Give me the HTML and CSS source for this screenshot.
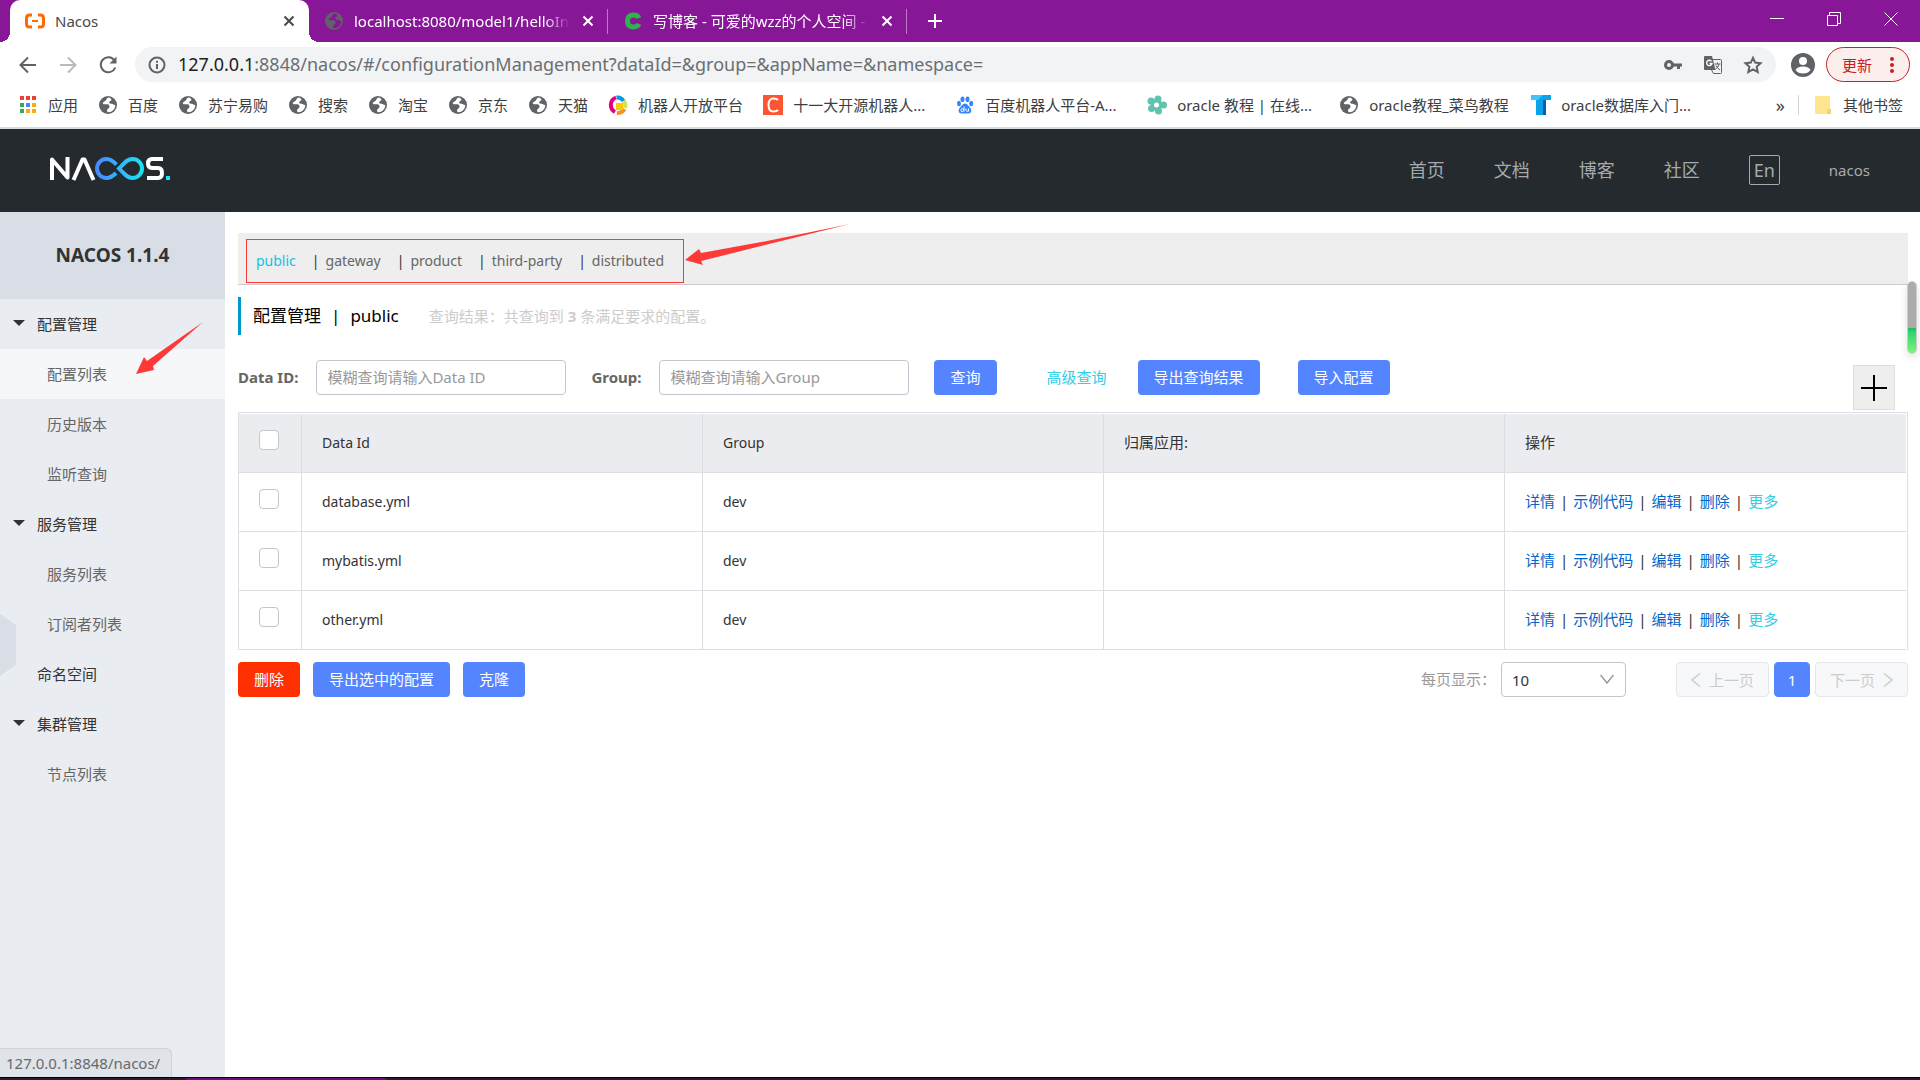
FILE: index.html
```html
<!DOCTYPE html>
<html lang="zh-CN">
<head>
<meta charset="utf-8">
<title>Nacos</title>
<link rel="stylesheet" href="styles.css">
</head>
<body>
<svg class="defs" aria-hidden="true">
  <defs>
    <symbol id="globe" viewBox="0 0 20 20"><circle cx="10" cy="10" r="9" fill="currentColor"/><path d="M10.500 2.600C8.500 3.200 9 4.600 7.800 5.400 6.200 6.400 4.600 7 4.800 8.600 5.200 9.800 7.600 9 9.200 9.300 11 9.600 11.800 10.600 11.400 12.200 11 13.600 9.200 13.600 9 15.200 8.900 16.200 9.400 17 10.200 17.300 14.400 17.200 17.300 14 17.300 10 15.600 10.400 15.400 9 13.800 8.800 12.400 8.700 11.200 8.400 11.200 7.200 11.200 6 13 6 13.400 4.900 13.600 4 12.200 2.800 10.500 2.600Z" fill="var(--land)"/></symbol>
    <symbol id="close" viewBox="0 0 16 16"><path d="M3.500 3.500 12.500 12.500M12.500 3.500 3.500 12.500" stroke="currentColor" stroke-width="2" fill="none"/></symbol>
  </defs>
</svg>

<div class="browser">
  <div class="tabstrip">
    <div class="tab tab-active">
      <svg class="icon" viewBox="0 0 20 20"><path d="M7 4H4.500Q1.500 4 1.500 7V13Q1.500 16 4.500 16H7M13 4H15.500Q18.500 4 18.500 7V13Q18.500 16 15.500 16H13" fill="none" stroke="#ff6a00" stroke-width="3"/><path d="M7 10H13" stroke="#ff6a00" stroke-width="2"/></svg>
      <span class="tab-title">Nacos</span>
      <button class="tab-close" aria-label="关闭"><svg viewBox="0 0 16 16"><use href="#close"/></svg></button>
    </div>
    <div class="tab">
      <svg class="icon icon-dim" viewBox="0 0 20 20"><use href="#globe"/></svg>
      <span class="tab-title fade">localhost:8080/model1/helloIn</span>
      <button class="tab-close" aria-label="关闭"><svg viewBox="0 0 16 16"><use href="#close"/></svg></button>
    </div>
    <div class="tab">
      <svg class="icon" viewBox="0 0 20 20"><path d="M16 7Q14.500 4 10.500 4 4.500 4 4.500 10 4.500 16 10.500 16 14.500 16 16 13" fill="none" stroke="#2fb24c" stroke-width="5"/></svg>
      <span class="tab-title fade">写博客 - 可爱的wzz的个人空间 -</span>
      <button class="tab-close" aria-label="关闭"><svg viewBox="0 0 16 16"><use href="#close"/></svg></button>
    </div>
    <button class="new-tab" aria-label="新标签页"><svg viewBox="0 0 16 16"><path d="M8 1V15M1 8H15" stroke="currentColor" stroke-width="2"/></svg></button>
    <div class="window-controls">
      <button aria-label="最小化"><svg viewBox="0 0 14 14"><path d="M0 6.500H14" stroke="currentColor"/></svg></button>
      <button aria-label="还原"><svg viewBox="0 0 14 14"><path d="M.5 3.500H10.500V13.500H.5ZM2.500 3.500V.5H13.500V11.500H10.500" fill="none" stroke="currentColor"/></svg></button>
      <button aria-label="关闭窗口"><svg viewBox="0 0 14 14"><path d="M.5 .5 13.500 13.500M13.500 .5 .5 13.500" stroke="currentColor"/></svg></button>
    </div>
  </div>

  <div class="toolbar">
    <button class="nav-btn" aria-label="后退"><svg viewBox="0 0 20 20"><path d="M18 10H3M10 2.500 2.500 10 10 17.500" fill="none" stroke="currentColor" stroke-width="2"/></svg></button>
    <button class="nav-btn nav-off" aria-label="前进"><svg viewBox="0 0 20 20"><path d="M2 10H17M10 2.500 17.500 10 10 17.500" fill="none" stroke="currentColor" stroke-width="2"/></svg></button>
    <button class="nav-btn" aria-label="重新加载"><svg viewBox="0 0 20 20"><path d="M16.500 5.500A7.500 7.500 0 1 0 17.300 12.500" fill="none" stroke="currentColor" stroke-width="2"/><path d="M18.500 1.500V8.500H11.500Z" fill="currentColor"/></svg></button>
    <div class="omnibox">
      <svg class="info" viewBox="0 0 18 18"><circle cx="9" cy="9" r="7.500" fill="none" stroke="currentColor" stroke-width="2"/><path d="M9 8V13M9 4.800V6.800" stroke="currentColor" stroke-width="2"/></svg>
      <div class="url" role="textbox" aria-label="地址"><span class="host">127.0.0.1</span>:8848/nacos/#/configurationManagement?dataId=&amp;group=&amp;appName=&amp;namespace=</div>
      <svg class="icon" viewBox="0 0 20 20"><circle cx="6" cy="10" r="3.500" fill="none" stroke="currentColor" stroke-width="3"/><path d="M10 10H19M15.500 10V14" stroke="currentColor" stroke-width="3"/></svg>
      <svg class="icon" viewBox="0 0 20 20"><path d="M8 4.500H17.500Q18.500 4.500 18.500 5.500V17.500Q18.500 18.500 17.500 18.500H10.500L8 14" fill="none" stroke="currentColor"/><path d="M2 1H9L12.500 15H2Q1 15 1 14V2Q1 1 2 1Z" fill="currentColor"/><path d="M8.500 6.300A2.700 2.700 0 1 0 9 8.500H6.500" fill="none" stroke="#fff" stroke-width="1.300"/><path d="M11.500 9H17.500M14.500 7.500V9M16 9Q15.500 12.500 12.500 14M13 10.500Q14.500 13.500 17 15" fill="none" stroke="currentColor"/></svg>
      <svg class="icon" viewBox="0 0 20 20"><path d="M10 2.800 12.200 7.600 17.500 8.200 13.600 11.800 14.700 17 10 14.300 5.300 17 6.400 11.800 2.500 8.200 7.800 7.600Z" fill="none" stroke="currentColor" stroke-width="2"/></svg>
    </div>
    <svg class="avatar" viewBox="0 0 24 24"><circle cx="12" cy="12" r="12" fill="currentColor"/><circle cx="12" cy="8" r="4" fill="#fff"/><path d="M4.500 17Q6 13.500 12 13.500T19.500 17Q17 20.500 12 20.500T4.500 17Z" fill="#fff"/></svg>
    <button class="update">更新<svg viewBox="0 0 4 18"><circle cx="2" cy="3" r="2"/><circle cx="2" cy="9" r="2"/><circle cx="2" cy="15" r="2"/></svg></button>
  </div>

  <nav class="bookmarks" aria-label="书签">
    <a href="#"><svg class="icon" viewBox="0 0 20 20"><path d="M2 1H6V5H2ZM8 1H12V5H8ZM14 1H18V5H14Z" fill="#ea4335"/><path d="M2 8H6V12H2ZM2 14H6V18H2Z" fill="#34a853"/><path d="M8 8H12V12H8Z" fill="#4285f4"/><path d="M14 8H18V12H14ZM8 14H12V18H8ZM14 14H18V18H14Z" fill="#fbab05"/></svg>应用</a>
    <a href="#"><svg class="icon" viewBox="0 0 20 20"><use href="#globe"/></svg>百度</a>
    <a href="#"><svg class="icon" viewBox="0 0 20 20"><use href="#globe"/></svg>苏宁易购</a>
    <a href="#"><svg class="icon" viewBox="0 0 20 20"><use href="#globe"/></svg>搜索</a>
    <a href="#"><svg class="icon" viewBox="0 0 20 20"><use href="#globe"/></svg>淘宝</a>
    <a href="#"><svg class="icon" viewBox="0 0 20 20"><use href="#globe"/></svg>京东</a>
    <a href="#"><svg class="icon" viewBox="0 0 20 20"><use href="#globe"/></svg>天猫</a>
    <a href="#"><svg class="icon" viewBox="0 0 20 20"><g fill="none" stroke-width="4"><path d="M8 2.500A8 8 0 0 0 7 17" stroke="#e6007e"/><path d="M8.500 2.500A7 7 0 0 1 15.500 6" stroke="#1296db"/><path d="M16 6A9 9 0 0 1 17 13" stroke="#d4e34a"/><path d="M16.500 14A8 8 0 0 1 9 18" stroke="#f7931e"/></g><path d="M8 8H15V15H8Z" fill="#fcc800"/></svg>机器人开放平台</a>
    <a href="#" class="long"><svg class="icon" viewBox="0 0 20 20"><path d="M0 0H20V20H0Z" fill="#fc5531"/><path d="M15 5Q13.500 3.500 10.500 3.500 5.500 3.500 5.500 10T10.500 16.500Q13.500 16.500 15 15" fill="none" stroke="#fff" stroke-width="2"/></svg>十一大开源机器人...</a>
    <a href="#" class="long"><svg class="icon" viewBox="0 0 20 20"><g fill="#3385ff"><ellipse cx="4" cy="8.500" rx="2" ry="2.700"/><ellipse cx="7.500" cy="4.300" rx="2" ry="2.800"/><ellipse cx="12.500" cy="4.300" rx="2" ry="2.800"/><ellipse cx="16.200" cy="8.500" rx="2" ry="2.700"/><path d="M10 8.500C12.500 8.500 13.500 11 15 12.500 17 14.500 17 18.500 13.500 18.500H6.500C3 18.500 3 14.500 5 12.500 6.500 11 7.500 8.500 10 8.500Z"/></g><path d="M9 11.500V16.500M9 14.500Q6 12.500 6 15.200T9 15.500M11 13.500V15.500Q11 16.500 13.500 16.200V13.500" fill="none" stroke="#fff"/></svg>百度机器人平台-A...</a>
    <a href="#" class="long"><svg class="icon" viewBox="0 0 20 20"><g fill="#5fc3b0"><circle cx="11" cy="4" r="3.500"/><circle cx="4" cy="6" r="3.500"/><circle cx="4.500" cy="13.500" r="3.500"/><circle cx="11.500" cy="16" r="3.500"/><circle cx="16.500" cy="10" r="3.500"/><circle cx="9.500" cy="10" r="6"/></g><circle cx="9.500" cy="10" r="2.500" fill="#fff"/></svg>oracle 教程 | 在线...</a>
    <a href="#" class="long"><svg class="icon" viewBox="0 0 20 20"><use href="#globe"/></svg>oracle教程_菜鸟教程</a>
    <a href="#" class="long"><svg class="icon" viewBox="0 0 20 20"><path d="M0 0H20V5H15V20H5V5H0Z" fill="#0aa2e8"/><path d="M0 0H12L7 5H0Z" fill="#41c4fb"/><path d="M12 5H15V20H12Z" fill="#0a5bb5"/></svg>oracle数据库入门...</a>
    <button class="more" aria-label="更多书签">»</button>
    <a href="#" class="other"><svg class="icon" viewBox="0 0 20 20"><path d="M3 1H16Q17 1 17 2V19H3Q2 19 2 18V2Q2 1 3 1Z" fill="#ffe58e"/><path d="M14 14H18V18Q18 19 17 19H14Z" fill="#fbd456"/></svg>其他书签</a>
  </nav>
</div>

<header class="site-header">
  <a href="#" class="logo" aria-label="NACOS">
    <svg viewBox="0 0 122 24">
      <defs><linearGradient id="inf" gradientUnits="userSpaceOnUse" x1="46" x2="95" y1="0" y2="0"><stop offset="0" stop-color="#4a86ff"/><stop offset="1" stop-color="#17e6f5"/></linearGradient></defs>
      <g fill="none" stroke="#fff" stroke-width="4" stroke-linejoin="round"><path d="M3 23V2.500L18.500 20.500V0"/><path d="M24.500 23 33.500 2.500H35.500L44.500 23"/><path d="M114 2H103Q99 2 99 6.500T103 11H109Q113 11 113 16T109 21H98"/></g>
      <g fill="none" stroke="url(#inf)" stroke-width="4"><path d="M67.500 7.500C64 4 61 2 57.500 2 52 2 48 6.500 48 11.500S52 21 57.500 21C61 21 64 19 67 16"/><path d="M70 11.500C75 6.500 78 2 83.500 2 89 2 93 6.500 93 11.500S89 21 83.500 21C78 21 75 16.500 70 11.500Z"/></g>
      <path d="M117 19H121V23H117Z" fill="#17e6f5"/>
    </svg>
  </a>
  <nav class="site-nav" aria-label="站点">
    <a href="#">首页</a><a href="#">文档</a><a href="#">博客</a><a href="#">社区</a>
    <button class="lang">En</button>
    <a href="#" class="user">nacos</a>
  </nav>
</header>

<div class="layout">
  <aside class="sidebar">
    <h1>NACOS 1.1.4</h1>
    <ul class="menu">
      <li class="group"><a href="#">配置管理</a></li>
      <li class="leaf current"><a href="#">配置列表</a></li>
      <li class="leaf"><a href="#">历史版本</a></li>
      <li class="leaf"><a href="#">监听查询</a></li>
      <li class="group"><a href="#">服务管理</a></li>
      <li class="leaf"><a href="#">服务列表</a></li>
      <li class="leaf"><a href="#">订阅者列表</a></li>
      <li class="plain"><a href="#">命名空间</a></li>
      <li class="group"><a href="#">集群管理</a></li>
      <li class="leaf"><a href="#">节点列表</a></li>
    </ul>
    <button class="collapse" aria-label="收起菜单"></button>
    <svg class="arrow-menu" viewBox="0 0 67 53" aria-hidden="true"><path d="M67 0 17 44 18 48 0 52 8 35 11 39Z" fill="#fe3a39"/></svg>
    <div class="status">127.0.0.1:8848/nacos/</div>
  </aside>

  <main class="content">
    <nav class="namespaces" aria-label="命名空间">
      <a href="#" class="on">public</a><a href="#">gateway</a><a href="#">product</a><a href="#">third-party</a><a href="#">distributed</a>
      <span class="frame"></span>
      <svg class="arrow-ns" viewBox="0 0 165 42" aria-hidden="true"><path d="M165 0 16 37 18 41 0 36 14 25 16 29 82 17Z" fill="#fe3a39"/></svg>
    </nav>

    <div class="title">
      <h2>配置管理<span class="bar">|</span>public</h2>
      <p>查询结果：共查询到 <b>3</b> 条满足要求的配置。</p>
    </div>

    <form class="search">
      <label for="data-id">Data ID:</label>
      <input id="data-id" type="text" placeholder="模糊查询请输入Data ID">
      <label for="group">Group:</label>
      <input id="group" type="text" placeholder="模糊查询请输入Group">
      <button type="button" class="btn">查询</button>
      <a href="#" class="advanced">高级查询</a>
      <button type="button" class="btn export">导出查询结果</button>
      <button type="button" class="btn">导入配置</button>
      <button type="button" class="add" aria-label="新建配置"><svg viewBox="0 0 26 26"><path d="M13 0V26M0 13H26" stroke="#000" stroke-width="2"/></svg></button>
    </form>

    <div class="table-wrap">
      <table>
        <thead>
          <tr><th class="check"><input type="checkbox" aria-label="全选"></th><th>Data Id</th><th>Group</th><th>归属应用:</th><th>操作</th></tr>
        </thead>
        <tbody>
          <tr><td class="check"><input type="checkbox" aria-label="database.yml"></td><td>database.yml</td><td>dev</td><td></td><td class="ops"><a href="#">详情</a><i>|</i><a href="#">示例代码</a><i>|</i><a href="#">编辑</a><i>|</i><a href="#">删除</a><i>|</i><a href="#" class="cyan">更多</a></td></tr>
          <tr><td class="check"><input type="checkbox" aria-label="mybatis.yml"></td><td>mybatis.yml</td><td>dev</td><td></td><td class="ops"><a href="#">详情</a><i>|</i><a href="#">示例代码</a><i>|</i><a href="#">编辑</a><i>|</i><a href="#">删除</a><i>|</i><a href="#" class="cyan">更多</a></td></tr>
          <tr><td class="check"><input type="checkbox" aria-label="other.yml"></td><td>other.yml</td><td>dev</td><td></td><td class="ops"><a href="#">详情</a><i>|</i><a href="#">示例代码</a><i>|</i><a href="#">编辑</a><i>|</i><a href="#">删除</a><i>|</i><a href="#" class="cyan">更多</a></td></tr>
        </tbody>
      </table>
    </div>

    <div class="footer-row">
      <button class="btn danger">删除</button>
      <button class="btn">导出选中的配置</button>
      <button class="btn">克隆</button>
      <div class="pager">
        <label for="size">每页显示：</label>
        <span class="select"><select id="size"><option>10</option></select><svg viewBox="0 0 14 10"><path d="M.5 1 7 9 13.500 1" fill="none" stroke="currentColor" stroke-width="1.500"/></svg></span>
        <button class="page" disabled><svg viewBox="0 0 10 14"><path d="M9 .5 1 7 9 13.500" fill="none" stroke="currentColor" stroke-width="1.500"/></svg>上一页</button>
        <button class="page page-on">1</button>
        <button class="page" disabled>下一页<svg viewBox="0 0 10 14"><path d="M1 .5 9 7 1 13.500" fill="none" stroke="currentColor" stroke-width="1.500"/></svg></button>
      </div>
    </div>
    <span class="meter"></span>
  </main>
</div>
<div class="taskbar"><span></span></div>
</body>
</html>
```

FILE: styles.css
```css
* { box-sizing: border-box; }

body {
  margin: 0;
  min-height: 100vh;
  display: flex;
  flex-direction: column;
  font: 15px/20px "Noto Sans", "Noto Sans CJK SC", sans-serif;
  color: #333;
  background: #fff;
}

a { color: inherit; text-decoration: none; }
button { margin: 0; padding: 0; border: 0; background: none; font: inherit; color: inherit; }
svg { display: block; flex: none; }
h1, h2, p, ul { margin: 0; padding: 0; }
.defs { position: absolute; width: 0; height: 0; }
.icon { width: 20px; height: 20px; flex: none; }

/* browser chrome */
.browser { --land: #fff; border-bottom: 2px solid #d9dade; }

.tabstrip { display: flex; height: 42px; padding-left: 10px; background: #881798; color: #fff; }
.tab {
  flex: 0 1 299px;
  min-width: 0;
  display: flex;
  align-items: center;
  gap: 10px;
  padding: 0 12px 0 15px;
  position: relative;
}
.tab + .tab::after {
  content: "";
  position: absolute;
  right: 0;
  top: 9px;
  width: 1px;
  height: 25px;
  background: #bb7ac4;
}
.tab-active { background: #fff; color: #45494d; border-radius: 10px 10px 0 0; }
.tab-active::before, .tab-active::after {
  content: "";
  position: absolute;
  bottom: 0;
  width: 10px;
  height: 10px;
}
.tab-active::before { left: -10px; background: radial-gradient(circle at 0 0, transparent 10px, #fff 10px); }
.tab-active::after { right: -10px; background: radial-gradient(circle at 100% 0, transparent 10px, #fff 10px); }
.tab-title { flex: 1; min-width: 0; white-space: nowrap; }
.fade { -webkit-mask-image: linear-gradient(90deg, #000 88%, transparent); mask-image: linear-gradient(90deg, #000 88%, transparent); }
.tab-close svg { width: 16px; height: 16px; }
.icon-dim { --land: #881798; color: #5f6368; }
.new-tab { margin-left: 20px; }
.new-tab svg { width: 16px; height: 16px; }
.window-controls { display: flex; align-items: flex-start; gap: 43px; margin-left: auto; padding: 12px 22px 0 0; }
.window-controls svg { width: 14px; height: 14px; }

.toolbar { display: flex; align-items: center; height: 45px; padding: 0 10px 0 18px; gap: 20px; color: #5f6368; }
.nav-btn svg { width: 20px; height: 20px; }
.nav-off { color: #b8babd; }
.omnibox {
  flex: 1;
  display: flex;
  align-items: center;
  gap: 20px;
  height: 35px;
  margin-left: -3px;
  padding: 0 13px;
  border-radius: 18px;
  background: #f1f3f4;
}
.info { width: 18px; height: 18px; }
.url { flex: 1; margin-left: -8px; padding-bottom: 2px; font-size: 18px; line-height: 26px; color: #6b6f73; white-space: nowrap; }
.host { color: #202124; }
.avatar { width: 24px; height: 28px; margin: 0 -9px 0 -5px; }
.update {
  display: flex;
  align-items: center;
  gap: 18px;
  height: 35px;
  padding: 0 15px;
  border: 1px solid #c5221f;
  border-radius: 18px;
  background: #fceeed;
  color: #c5221f;
}
.update svg { width: 4px; height: 18px; fill: currentColor; }

.bookmarks { display: flex; align-items: center; gap: 20px; height: 40px; padding: 0 17px 4px 18px; color: #3c4043; white-space: nowrap; }
.bookmarks a { display: flex; align-items: center; gap: 10px; }
.bookmarks .icon { color: #5f6368; }
.bookmarks .long { flex: 0 0 172px; }
.more { margin-left: auto; font-size: 18px; }
.bookmarks .other { margin-left: -7px; padding-left: 14px; border-left: 1px solid #d0d2d5; }

/* site header */
.site-header { display: flex; align-items: center; justify-content: space-between; height: 83px; padding: 0 50px 2px 49px; background: #252a2f; }
.logo { padding-bottom: 2px; }
.logo svg { width: 122px; height: 24px; }
.site-nav { display: flex; align-items: center; gap: 49px; font-size: 18px; line-height: 26px; color: #a7aaac; }
.lang { height: 30px; padding: 0 4px; border: 1px solid #a7aaac; border-radius: 2px; line-height: 26px; }
.user { font-size: 15px; }

/* layout */
.layout { flex: 1; display: flex; }
.sidebar { position: relative; flex: 0 0 225px; background: #e9edf2; }
.sidebar h1 { height: 87px; background: #d9dde5; font-size: 19px; line-height: 87px; text-align: center; }
.menu { list-style: none; line-height: 50px; }
.menu a { display: block; padding-left: 37px; }
.menu .leaf a { padding-left: 47px; color: #666; }
.menu .current { background: #f5f7f9; }
.group { position: relative; }
.group::before {
  content: "";
  position: absolute;
  left: 13px;
  top: 21px;
  border: 6px solid transparent;
  border-top-color: #333;
  border-bottom: 0;
}
.collapse {
  position: absolute;
  left: 0;
  top: 402px;
  width: 16px;
  height: 62px;
  background: #d9dde5;
  clip-path: polygon(0 0, 100% 18%, 100% 82%, 0 100%);
}
.arrow-menu { position: absolute; left: 136px; top: 110px; width: 67px; height: 53px; }
.status {
  position: absolute;
  left: 0;
  bottom: 0;
  padding: 4px 11px 4px 6px;
  border: solid #cfd2d8;
  border-width: 1px 1px 0 0;
  border-radius: 0 6px 0 0;
  background: #e0e3e7;
  color: #666a6e;
}

.content { position: relative; flex: 1; min-width: 0; padding: 21px 12px 0 13px; }
.namespaces {
  position: relative;
  display: flex;
  height: 52px;
  padding: 0 18px;
  border-bottom: 1px solid #ccc;
  background: #eee;
  color: #666;
  font-size: 14px;
  line-height: 56px;
}
.namespaces a + a { margin-left: 16px; }
.namespaces a + a::before { content: "|"; margin-right: 6px; color: #333; }
.namespaces .on { color: #16c1e0; }
.frame { position: absolute; left: 8px; top: 6px; width: 438px; height: 44px; border: 1px solid #fe3a39; }
.arrow-ns { position: absolute; left: 447px; top: -9px; width: 165px; height: 42px; }

.title { display: flex; align-items: center; gap: 30px; height: 38px; margin-top: 12px; padding-left: 12px; border-left: 3px solid #0099cc; }
.title h2 { font-size: 17px; font-weight: 400; line-height: 24px; color: #000; }
.bar { margin: 0 10px; }
.title p { color: #ccc; }

.search { display: flex; align-items: center; height: 35px; margin-top: 25px; }
.search label { margin-right: 18px; padding-bottom: 2px; font-weight: 700; color: #666; }
.search input {
  flex: 0 0 250px;
  height: 35px;
  margin-right: 25px;
  padding: 0 10px 2px;
  border: 1px solid #c4c6cf;
  border-radius: 4px;
  font: inherit;
}
.search input::placeholder { color: #999; opacity: 1; }
.btn { height: 35px; padding: 0 16px 2px; border-radius: 4px; background: #5584ff; color: #fff; }
.danger { background: #ff3000; }
.advanced { margin: 0 31px 0 50px; padding-bottom: 2px; color: #33cde5; }
.export { margin-right: 38px; }
.add {
  align-self: flex-start;
  flex: none;
  display: grid;
  place-items: center;
  width: 42px;
  height: 45px;
  margin: 5px 13px 0 auto;
  border: 1px solid #ddd;
  background: #eee;
}
.add svg { width: 26px; height: 26px; }

.table-wrap { margin-top: 17px; padding: 1px 1px 0 0; border: solid #dcdee3; border-width: 1px 1px 0 1px; }
table { width: 100%; table-layout: fixed; border-collapse: separate; border-spacing: 0; }
th, td {
  height: 59px;
  padding: 0 20px;
  border: solid #dcdee3;
  border-width: 0 1px 1px 0;
  font-size: 14px;
  font-weight: 400;
  text-align: left;
}
th:nth-child(n+4), .ops { padding-bottom: 2px; font-size: 15px; }
th { background: #ebecf0; }
th:last-child, td:last-child { border-right: 0; }
.check { width: 63px; }
.check input {
  display: block;
  width: 20px;
  height: 20px;
  margin: 0 0 6px;
  border: 1px solid #c4c6cf;
  border-radius: 4px;
  background: #fff;
  appearance: none;
}
.ops a { color: #0066cc; }
.ops .cyan { color: #33cde5; }
.ops i { margin: 0 5px; font-style: normal; }

.footer-row { display: flex; gap: 13px; margin-top: 12px; }
.pager { display: flex; align-items: center; gap: 5px; margin-left: auto; color: #999; }
.pager label { padding-bottom: 2px; }
.select { position: relative; margin: 0 45px 0 0; }
.select select {
  display: block;
  width: 125px;
  height: 35px;
  padding: 0 10px;
  border: 1px solid #c4c6cf;
  border-radius: 4px;
  background: #fff;
  color: #333;
  font: inherit;
  appearance: none;
}
.select svg { position: absolute; right: 12px; top: 12px; width: 14px; height: 10px; }
.page {
  display: flex;
  align-items: center;
  justify-content: center;
  gap: 8px;
  height: 35px;
  padding: 0 14px;
  border: 1px solid #e6e7eb;
  border-radius: 4px;
  background: #f7f8fa;
  color: #ccc;
}
.page svg { width: 10px; height: 14px; }
.page-on { width: 36px; padding: 0; border-color: #5584ff; background: #5584ff; color: #fff; }

.meter {
  position: absolute;
  right: 3px;
  top: 69px;
  width: 10px;
  height: 73px;
  border: 1px solid #ccc;
  border-radius: 5px;
  background: linear-gradient(#ababab 46px, #1cbd60 46px, #2fd36f 50px, #7bf77d);
  box-shadow: 0 4px 8px rgba(0, 0, 0, .12);
}

.taskbar { height: 3px; border-top: 1px solid #000; background: #2c1a33; }
.taskbar span { display: block; width: 200px; height: 2px; margin-left: 186px; background: #6c1178; }
```
